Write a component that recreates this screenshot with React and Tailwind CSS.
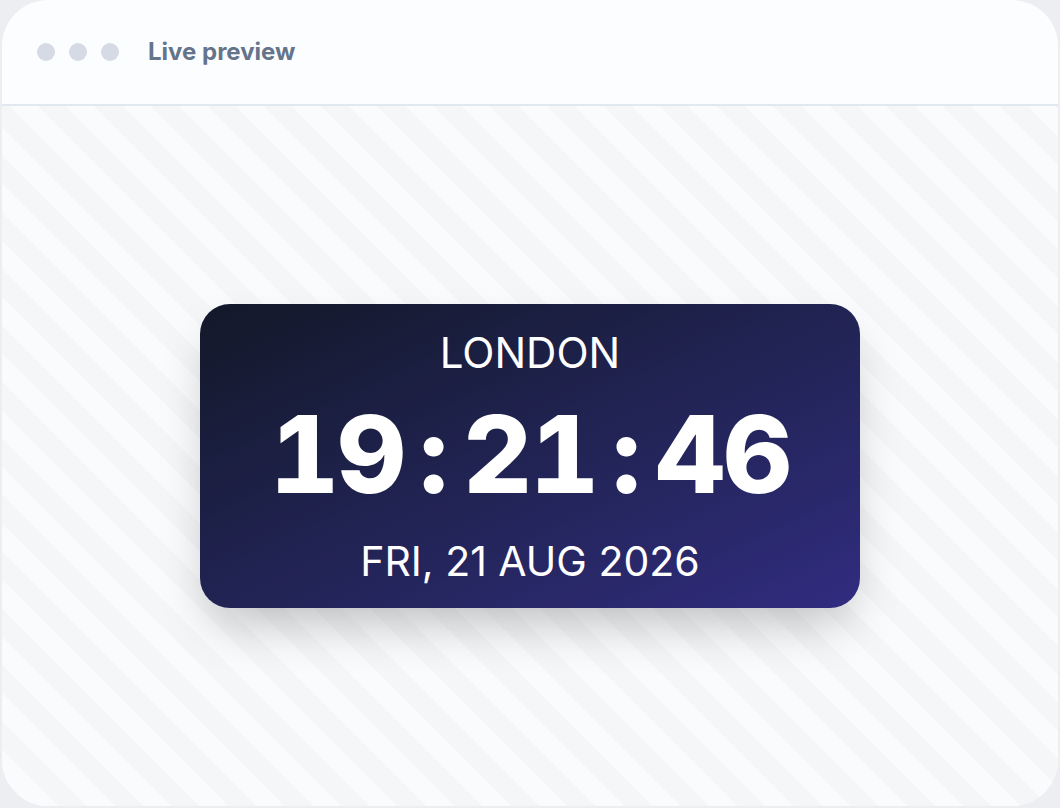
export default function App() {
  return (
    <div className="h-[808px] w-[1060px] bg-[#eceef2] px-[2px] pb-[2px]" style={{ fontFamily: "Inter, 'Noto Sans', sans-serif" }}>
      <div className="flex h-full flex-col overflow-hidden rounded-[46px] bg-[#fcfdfe]">
        <div className="flex h-[106px] shrink-0 items-center border-b-2 border-[#e2e8f0] pl-[35px]">
          <div className="flex items-center gap-[14px]">
            <span className="h-[18px] w-[18px] rounded-full bg-[#d5dae4]" />
            <span className="h-[18px] w-[18px] rounded-full bg-[#d5dae4]" />
            <span className="h-[18px] w-[18px] rounded-full bg-[#d5dae4]" />
          </div>
          <span className="ml-[29px] text-[24px] font-bold leading-none text-[#64748b]">Live preview</span>
        </div>
        <div className="flex flex-1 items-center justify-center bg-[repeating-linear-gradient(45deg,#f5f6f8_0_20px,#fafbfc_20px_40px)]">
          <div className="flex h-[304px] w-[660px] flex-col items-center rounded-[30px] bg-linear-to-br from-[#131829] to-[#312c80] pt-[28px] text-white shadow-2xl">
            <div className="text-[42px] leading-none font-normal">LONDON</div>
            <div className="mt-[27px] flex items-center text-[107px] font-extrabold leading-none tabular-nums">
              <span className="tracking-[-2px]">19</span>
              <span className="mx-[15px]">:</span>
              <span className="tracking-[-2px]">21</span>
              <span className="mx-[15px]">:</span>
              <span className="tracking-[-2px]">46</span>
            </div>
            <div className="mt-[33px] text-[41px] leading-none font-normal">FRI, 21 AUG 2026</div>
          </div>
        </div>
      </div>
    </div>
  );
}
